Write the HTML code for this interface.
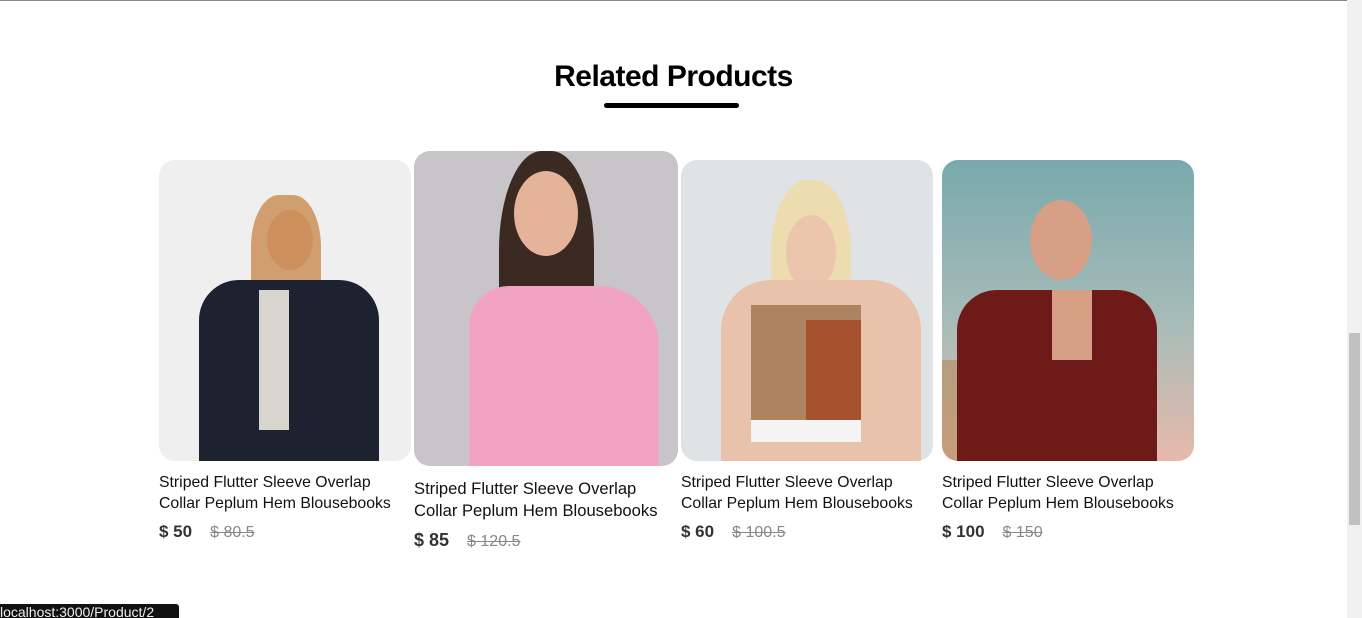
<!DOCTYPE html>
<html><head><meta charset="utf-8"><style>
html,body{margin:0;padding:0;width:1362px;height:618px;overflow:hidden;background:#fff;font-family:"Liberation Sans",sans-serif;}
.top{position:absolute;left:0;top:0;width:1347px;height:1px;background:#888;}
.sb{position:absolute;left:1347px;top:0;width:15px;height:618px;background:#f1f1f1;}
.thumb{position:absolute;left:1349px;top:333px;width:11px;height:192px;background:#c1c1c1;}
h2{position:absolute;left:0;width:1347px;top:60px;margin:0;text-align:center;font-size:30px;font-weight:bold;color:#000;letter-spacing:-0.5px;}
.bar{position:absolute;left:604px;top:103px;width:135px;height:5px;border-radius:3px;background:#000;}
.card{position:absolute;width:252px;}
.img{position:relative;width:252px;height:301px;border-radius:16px;overflow:hidden;}
.t{font-size:15.8px;line-height:21px;color:#111;margin-top:11px;white-space:nowrap;}
.p{margin-top:8px;font-size:17px;}
.p b{color:#333;margin-right:18px;}
.p s{color:#888;font-size:16px;}
.status{position:absolute;left:0;top:604px;height:14px;width:179px;background:#111;color:#eee;font-size:14px;line-height:17px;padding-left:0;border-top-right-radius:3px;overflow:hidden;white-space:nowrap;}
.sh{position:absolute;}
</style></head><body>
<div class="top"></div>
<div class="sb"></div><div class="thumb"></div>
<h2>Related Products</h2>
<div class="bar"></div>

<div class="card" style="left:159px;top:160px">
<div class="img" style="background:#efefef">
<div class="sh" style="left:108px;top:50px;width:46px;height:60px;border-radius:50%;background:#d9a98a"></div>
<div class="sh" style="left:92px;top:35px;width:70px;height:130px;border-radius:40% 40% 20% 20%;background:#c98a50;opacity:.8"></div>
<div class="sh" style="left:40px;top:120px;width:180px;height:190px;border-radius:40px 40px 10px 10px;background:#1c2230"></div>
<div class="sh" style="left:100px;top:130px;width:30px;height:140px;background:#d8d4ce"></div>
</div>
<div class="t">Striped Flutter Sleeve Overlap<br>Collar Peplum Hem Blousebooks</div>
<div class="p"><b>$ 50</b><s>$ 80.5</s></div>
</div>

<div class="card" style="left:414px;top:151px;width:264px">
<div class="img" style="width:264px;height:315px;background:#c7c5c8">
<div class="sh" style="left:85px;top:0px;width:95px;height:220px;border-radius:45% 45% 30% 30%;background:#3a2a22"></div>
<div class="sh" style="left:100px;top:20px;width:64px;height:85px;border-radius:50%;background:#e4b39a"></div>
<div class="sh" style="left:55px;top:135px;width:190px;height:180px;border-radius:40px 60px 0 0;background:#f2a3c3"></div>
</div>
<div class="t" style="font-size:16.6px;line-height:22px;margin-top:12px">Striped Flutter Sleeve Overlap<br>Collar Peplum Hem Blousebooks</div>
<div class="p" style="font-size:18px"><b>$ 85</b><s>$ 120.5</s></div>
</div>

<div class="card" style="left:681px;top:160px">
<div class="img" style="background:#dfe3e5">
<div class="sh" style="left:90px;top:20px;width:80px;height:160px;border-radius:45%;background:#ecdcb0"></div>
<div class="sh" style="left:105px;top:55px;width:50px;height:75px;border-radius:50%;background:#ecc5ad"></div>
<div class="sh" style="left:40px;top:120px;width:200px;height:181px;border-radius:50px 50px 0 0;background:#e8c2aa"></div>
<div class="sh" style="left:70px;top:145px;width:110px;height:135px;background:#ae8460"></div>
<div class="sh" style="left:125px;top:160px;width:55px;height:105px;background:#a6522e"></div>
<div class="sh" style="left:70px;top:260px;width:110px;height:22px;background:#f4f4f4"></div>
</div>
<div class="t">Striped Flutter Sleeve Overlap<br>Collar Peplum Hem Blousebooks</div>
<div class="p"><b>$ 60</b><s>$ 100.5</s></div>
</div>

<div class="card" style="left:942px;top:160px">
<div class="img" style="background:linear-gradient(#79a9ad 0%,#a8bcb8 55%,#e8b9aa 100%)">
<div class="sh" style="left:0;top:200px;width:60px;height:101px;background:#b38a5a;opacity:.6"></div>
<div class="sh" style="left:88px;top:40px;width:62px;height:80px;border-radius:50%;background:#d69f86"></div>
<div class="sh" style="left:15px;top:130px;width:200px;height:171px;border-radius:40px 40px 0 0;background:#6e1a18"></div>
<div class="sh" style="left:110px;top:130px;width:40px;height:70px;background:#d69f86"></div>
</div>
<div class="t">Striped Flutter Sleeve Overlap<br>Collar Peplum Hem Blousebooks</div>
<div class="p"><b>$ 100</b><s>$ 150</s></div>
</div>

<div class="status">localhost:3000/Product/2</div>
</body></html>
